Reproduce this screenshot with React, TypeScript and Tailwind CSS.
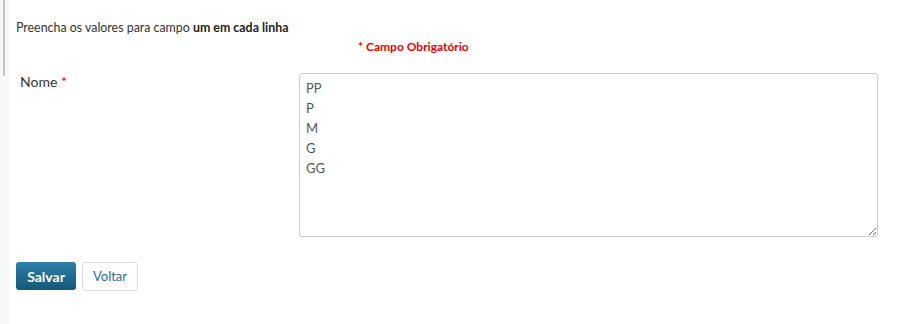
export default function App() {
  const values = "PP\nP\nM\nG\nGG";

  return (
    <div className="flex h-[324px] w-[908px] bg-white font-['Lato','Noto_Sans',sans-serif] text-[#333]">
      {/* Left rail */}
      <div className="flex w-[9px] shrink-0 flex-col bg-[#f7f7f7]">
        <div className="ml-[3px] h-[76px] w-[2px] bg-[#c4c4c4]" />
      </div>

      <div className="flex flex-1 flex-col pl-[7px] pr-[30px]">
        <p className="mt-[21px] text-[12.4px] leading-[14px] text-[#333]">
          Preencha os valores para campo <b className="font-bold text-[#222]">um em cada linha</b>
        </p>

        <p className="mt-[5px] pl-[342px] text-[12px] font-bold leading-[14px] text-[#ee0000]">
          * Campo Obrigatório
        </p>

        <div className="mt-[19px] flex">
          <label className="w-[283px] shrink-0 pl-[4px] pt-[1px] text-[14px] leading-[16px] text-[#333]">
            Nome <span className="text-[#e00]">*</span>
          </label>
          <textarea
            defaultValue={values}
            className="h-[164px] flex-1 resize-y rounded-[3px] border border-[#cccccc] px-[6px] pt-[4px] text-[13px] leading-[20px] text-[#555] outline-none"
          />
        </div>

        <div className="mt-[25px] flex gap-[6px]">
          <button className="h-[28px] w-[60px] rounded-[3px] bg-gradient-to-b from-[#2d80a8] to-[#15587a] text-[14px] font-bold text-white">
            Salvar
          </button>
          <button className="h-[29px] w-[56px] rounded-[3px] border border-[#dddddd] bg-white text-[13px] text-[#2a6d93]">
            Voltar
          </button>
        </div>
      </div>
    </div>
  );
}
